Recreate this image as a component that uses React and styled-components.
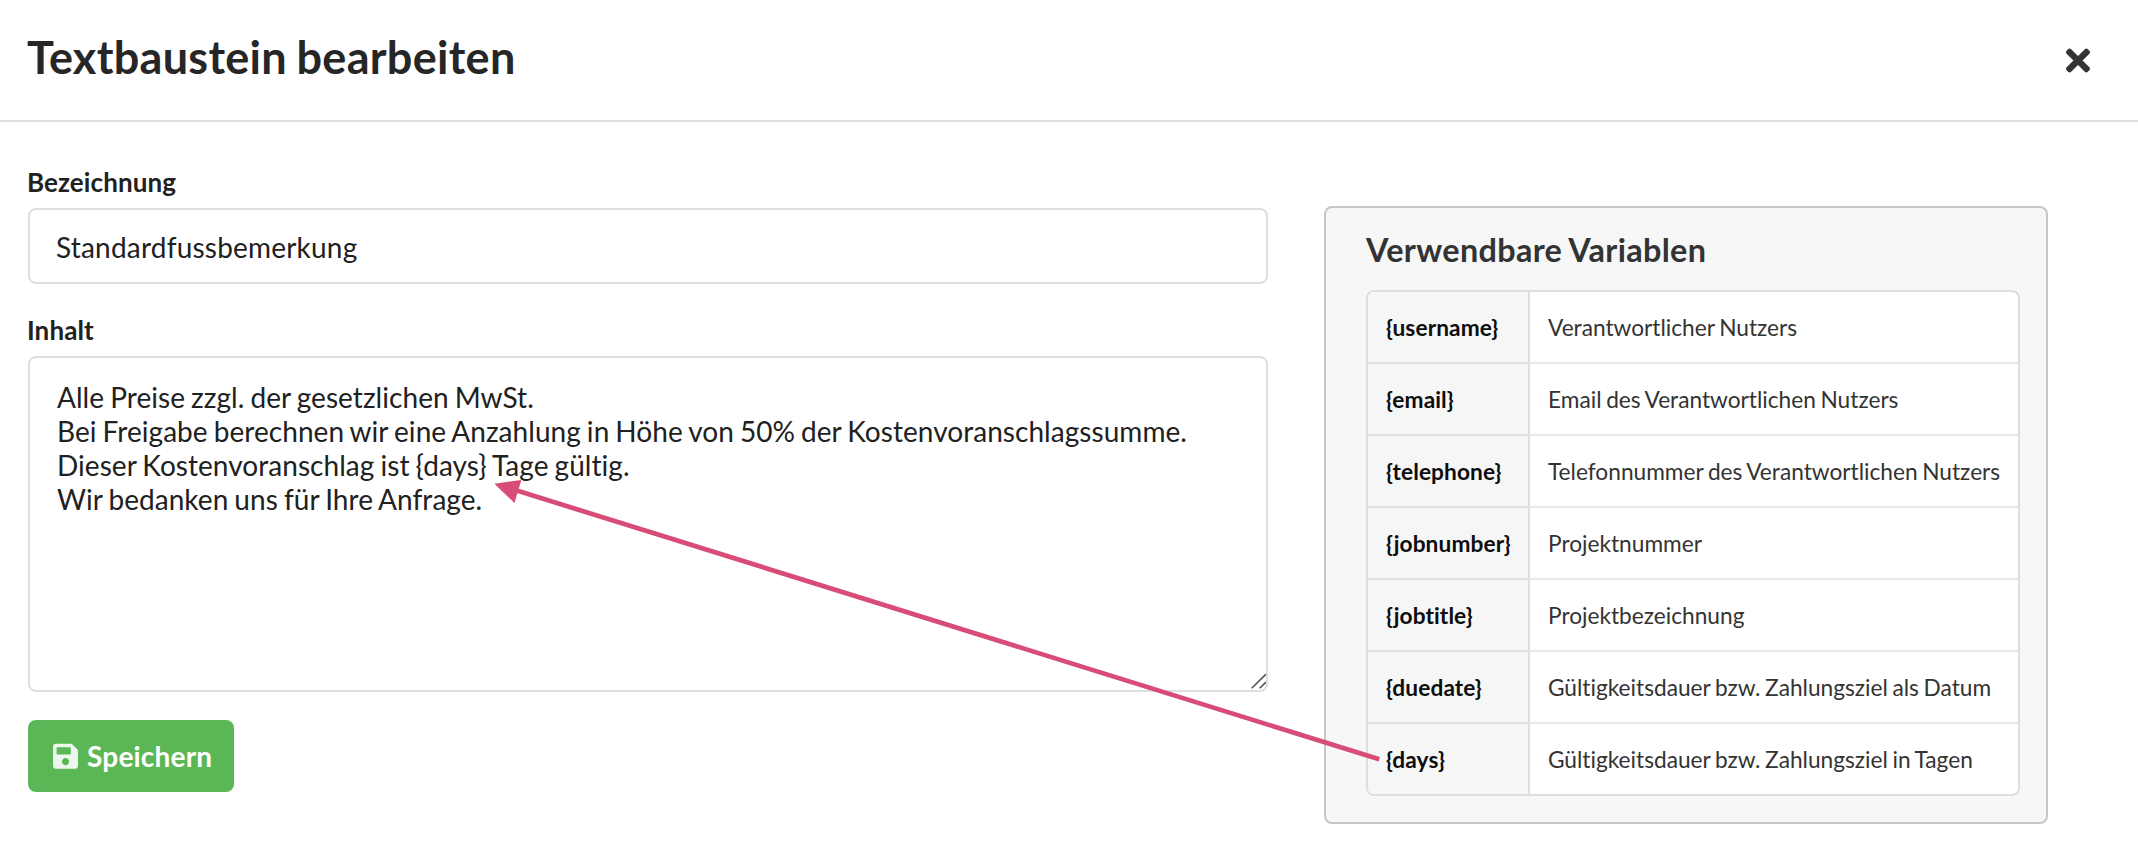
import React from 'react';
import styled, { createGlobalStyle } from 'styled-components';
import { FaSave, FaTimes } from 'react-icons/fa';

const GlobalStyle = createGlobalStyle`
  *, *::before, *::after { box-sizing: border-box; }
  body {
    margin: 0;
    background: #fff;
    color: #212121;
    font-family: Lato, "Helvetica Neue", Arial, sans-serif;
    font-size: 28px;
    letter-spacing: 0.2px;
    font-variant-ligatures: none;
  }
`;

const Modal = styled.div`
  position: relative;
  width: 2138px;
  height: 852px;
  overflow: hidden;
`;

const Header = styled.header`
  display: flex;
  align-items: center;
  justify-content: space-between;
  height: 122px;
  padding: 0 48px 0 27px;
  border-bottom: 2px solid #dedede;
`;

const Title = styled.h1`
  margin: 0 0 6px;
  color: #262626;
  font-size: 45px;
  letter-spacing: 0.3px;
  line-height: 58px;
  word-spacing: -0.04em;
`;

const CloseButton = styled.button`
  display: flex;
  padding: 0;
  border: 0;
  background: none;
  color: #333;
  font-size: 35px;

  svg { width: 24px; }
`;

const Content = styled.main`
  display: flex;
  align-items: flex-start;
  gap: 56px;
  padding: 43px 90px 0 28px;
`;

const Form = styled.form`
  display: flex;
  flex-direction: column;
  align-items: flex-start;
  width: 1240px;
`;

const Field = styled.div`
  display: flex;
  flex-direction: column;
  width: 100%;
  margin-bottom: ${({ $last }) => ($last ? 28 : 29)}px;
`;

const Label = styled.label`
  margin: 0 0 9px -1px;
  font-size: 26px;
  font-weight: 700;
  letter-spacing: 0.1px;
  line-height: 34px;
`;

const Input = styled.input`
  width: 100%;
  height: 76px;
  padding: 2px 26px 0;
  border: 2px solid #dedede;
  border-radius: 8px;
  outline: 0;
  color: inherit;
  font: inherit;
  letter-spacing: inherit;
`;

const TextBox = styled.div`
  position: relative;
  height: 336px;
  padding: 22px 27px;
  border: 2px solid #dedede;
  border-radius: 8px;
  letter-spacing: 0.05px;
  line-height: 34px;
  word-spacing: -0.042em;
  white-space: pre;
`;

const ResizeGrip = styled.svg`
  position: absolute;
  right: 0;
  bottom: 0;
`;

const SaveButton = styled.button`
  display: flex;
  align-items: center;
  gap: 9px;
  width: 206px;
  height: 72px;
  padding: 0 0 0 25px;
  border: 0;
  border-radius: 8px;
  background: #5bb656;
  color: #fff;
  font: 700 28px Lato, sans-serif;
  letter-spacing: 0.2px;

  svg { opacity: 0.9; font-size: 28.5px; width: 25px; }
`;

const Panel = styled.aside`
  width: 724px;
  height: 618px;
  margin-top: 41px;
  padding: 21px 26px 26px 40px;
  border: 2px solid #c6c6c6;
  border-radius: 8px;
  background: #f7f7f7;
`;

const PanelTitle = styled.h2`
  margin: 0 0 19px;
  color: #333;
  font-size: 32.4px;
  letter-spacing: 0.32px;
  line-height: 42px;
  word-spacing: -0.03em;
`;

const Table = styled.div`
  width: 654px;
  overflow: hidden;
  border: 2px solid #dedede;
  border-radius: 8px;
  background: #fff;
  font-size: 22.68px;
`;

const Row = styled.div`
  display: grid;
  grid-template-columns: 162px 1fr;
  height: 72px;

  &:first-child { height: 70px; }
  &:not(:first-child) > * { border-top: 2px solid #e8e8e8; }
  &:not(:first-child) > :first-child { border-top-color: #dfdfdf; }
`;

const Cell = styled.div`
  display: flex;
  align-items: center;
  padding: 1px 0 0 18px;
  color: #333;
  letter-spacing: 0;
  white-space: nowrap;
  word-spacing: -0.05em;
`;

const KeyCell = styled(Cell)`
  border-right: 2px solid #dedede;
  background: #f6f6f6;
  color: #0d0d0d;
  font-weight: 700;
  letter-spacing: 0.1px;
`;

const Arrow = styled.svg`
  position: absolute;
  inset: 0;
  pointer-events: none;
`;

const text = [
  'Alle Preise zzgl. der gesetzlichen MwSt.',
  'Bei Freigabe berechnen wir eine Anzahlung in Höhe von 50% der Kostenvoranschlagssumme.',
  'Dieser Kostenvoranschlag ist {days} Tage gültig.',
  'Wir bedanken uns für Ihre Anfrage.',
].join('\n');

const variables = [
  ['{username}', 'Verantwortlicher Nutzers'],
  ['{email}', 'Email des Verantwortlichen Nutzers'],
  ['{telephone}', 'Telefonnummer des Verantwortlichen Nutzers'],
  ['{jobnumber}', 'Projektnummer'],
  ['{jobtitle}', 'Projektbezeichnung'],
  ['{duedate}', 'Gültigkeitsdauer bzw. Zahlungsziel als Datum'],
  ['{days}', 'Gültigkeitsdauer bzw. Zahlungsziel in Tagen'],
];

export default function App() {
  return (
    <>
      <GlobalStyle />
      <Modal>
        <Header>
          <Title>Textbaustein bearbeiten</Title>
          <CloseButton type="button" aria-label="Schließen"><FaTimes /></CloseButton>
        </Header>
        <Content>
          <Form>
            <Field>
              <Label htmlFor="name">Bezeichnung</Label>
              <Input id="name" defaultValue="Standardfussbemerkung" />
            </Field>
            <Field $last>
              <Label>Inhalt</Label>
              <TextBox role="textbox" aria-multiline="true">
                {text}
                <ResizeGrip width="16" height="20" viewBox="0 0 16 20" stroke="#555" strokeWidth="1.6">
                  <path d="M1.7 18.3 16 4M9.7 18.3 16 12" />
                </ResizeGrip>
              </TextBox>
            </Field>
            <SaveButton type="button"><FaSave />Speichern</SaveButton>
          </Form>
          <Panel>
            <PanelTitle>Verwendbare Variablen</PanelTitle>
            <Table>
              {variables.map(([name, description]) => (
                <Row key={name}>
                  <KeyCell>{name}</KeyCell>
                  <Cell>{description}</Cell>
                </Row>
              ))}
            </Table>
          </Panel>
        </Content>
        <Arrow width="2138" height="852" viewBox="0 0 2138 852">
          <path d="M516 490.3 1379.3 759.3" stroke="#d84c78" strokeWidth="4.7" />
          <path d="M494.3 483.7 521.3 480 514.5 503Z" fill="#d84c78" />
        </Arrow>
      </Modal>
    </>
  );
}
